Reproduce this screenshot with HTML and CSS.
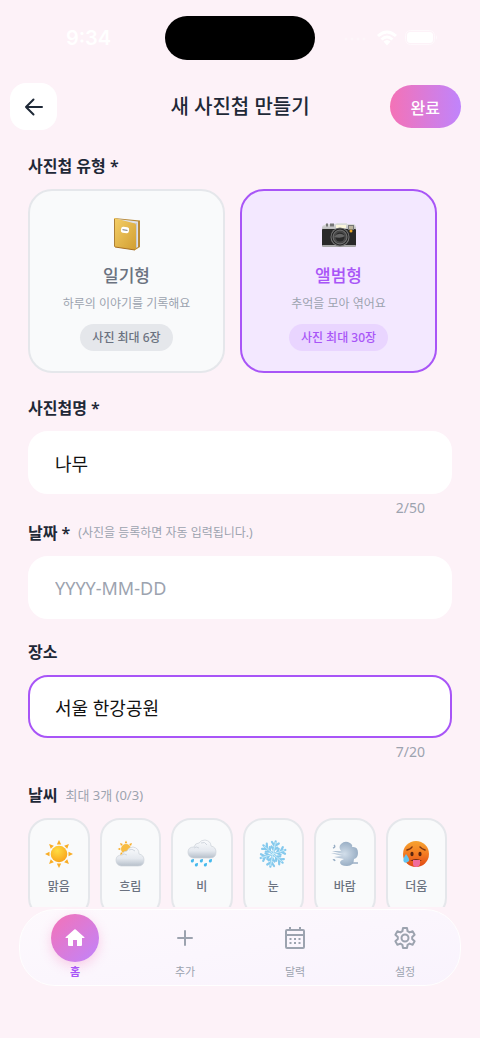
FILE: index.html
```html
<!DOCTYPE html>
<html lang="ko">

<head>
    <meta charset="UTF-8">
    <meta name="viewport" content="width=device-width, initial-scale=1.0">
    <title>새 사진첩 만들기</title>
    <link rel="stylesheet" href="styles.css">
</head>

<body>
    <div class="status-bar">
        <span class="time">9:34</span>
        <div class="island"></div>
        <div class="status-icons">
            <svg width="26" height="6" viewBox="0 0 26 6" fill="#fff" opacity="0.35">
                <circle cx="3" cy="4" r="1.500"/><circle cx="9" cy="4" r="1.500"/><circle cx="15" cy="4" r="1.500"/><circle cx="21" cy="4" r="1.500"/>
            </svg>
            <svg width="20" height="16" viewBox="0 0 20 16" fill="none" stroke="#fff" stroke-width="3">
                <path d="M1 6 Q10 -2 19 6"/>
                <path d="M4.500 9.500 Q10 4.500 15.500 9.500"/>
                <path d="M6.500 11.500 Q10 8.500 13.500 11.500 L10 15.500 Z" fill="#fff" stroke="none"/>
            </svg>
            <svg width="33" height="16" viewBox="0 0 33 16">
                <rect x="0.500" y="0.500" width="29" height="14" rx="5" fill="none" stroke="#fff" opacity="0.5"/>
                <rect x="2" y="2" width="26" height="11" rx="3.500" fill="#fff"/>
                <path d="M31 5 Q33 7.500 31 10 Z" fill="#fff" opacity="0.6"/>
            </svg>
        </div>
    </div>

    <header class="header">
        <button class="back-btn" type="button" aria-label="뒤로">
            <svg width="24" height="24" viewBox="0 0 24 24" fill="none" stroke="#1f2937" stroke-width="2" stroke-linecap="round" stroke-linejoin="round">
                <path d="M20 12H4M11.500 4.500L4 12l7.500 7.500"/>
            </svg>
        </button>
        <h1>새 사진첩 만들기</h1>
        <button class="done-btn" type="button">완료</button>
    </header>

    <main class="content">
        <h2 class="label">사진첩 유형 *</h2>
        <div class="types">
            <button class="type-card" type="button">
                <svg class="type-icon" viewBox="0 0 36 36">
                    <defs>
                        <linearGradient id="cover" x1="0" y1="0" x2="1" y2="1">
                            <stop offset="0" stop-color="#f5cf68"/><stop offset="1" stop-color="#d19e32"/>
                        </linearGradient>
                    </defs>
                    <path d="M5 2L31 4.500V31L26 34Z" fill="#b88937"/>
                    <path d="M8 3L29 5.500V31L25 33Z" fill="#dfe1e6"/>
                    <path d="M27 7V32M25 7V33" stroke="#9da1aa" stroke-width="0.700"/>
                    <path d="M5 2L26 7.500Q27 8 27 9V33Q27 34 26 34L6 31Q5 31 5 30Z" fill="url(#cover)"/>
                    <path d="M5 3V30L6 31V3Z" fill="#ad8037"/>
                    <path d="M6 31L26 34" stroke="#a76e21"/>
                    <rect x="12" y="11" width="8" height="6" rx="2" fill="#fff" transform="rotate(8 16 14)"/>
                    <path d="M13.500 13.700l5 .7" stroke="#777" stroke-width="1"/>
                </svg>
                <strong>일기형</strong>
                <span class="type-desc">하루의 이야기를 기록해요</span>
                <span class="type-limit">사진 최대 6장</span>
            </button>
            <button class="type-card selected" type="button">
                <svg class="type-icon" viewBox="0 0 36 36">
                    <defs>
                        <linearGradient id="metal" x1="0" y1="0" x2="0" y2="1">
                            <stop offset="0" stop-color="#e4e4e5"/><stop offset="1" stop-color="#b5b5b6"/>
                        </linearGradient>
                    </defs>
                    <path d="M1 12Q1 9 4 9V8H14L16 7H26V8H33Q35 9 35 12V14H1Z" fill="url(#metal)"/>
                    <rect x="1" y="13" width="34" height="17" rx="1" fill="#292929"/>
                    <rect x="1" y="29" width="34" height="2" rx="1" fill="#a7a7a7"/>
                    <path d="M5 9h2M9 9h4" stroke="#777" stroke-width="3"/>
                    <rect x="15" y="9" width="10" height="3" fill="#fbf6dc"/>
                    <rect x="27" y="9" width="6" height="5" fill="#777"/>
                    <rect x="28" y="10" width="4" height="3" fill="#bbb49e"/>
                    <circle cx="19" cy="21" r="9.500" fill="#777"/>
                    <circle cx="19" cy="21" r="8.500" fill="#242424"/>
                    <circle cx="19" cy="21" r="7" fill="#484848" stroke="#888" stroke-width="0.800"/>
                    <circle cx="19" cy="21" r="4.500" fill="#292929"/>
                    <path d="M13 21Q18 15 24 20Q20 23 13 21Z" fill="#666"/>
                    <circle cx="30" cy="15" r="1.500" fill="#eba827"/>
                </svg>
                <strong>앨범형</strong>
                <span class="type-desc">추억을 모아 엮어요</span>
                <span class="type-limit">사진 최대 30장</span>
            </button>
        </div>

        <div class="field">
            <label class="label" for="albumName">사진첩명 *</label>
            <input type="text" id="albumName" maxlength="50" value="나무">
            <span class="count">2/50</span>
        </div>

        <div class="field field-date">
            <div class="label-row">
                <label class="label" for="albumDate">날짜 *</label>
                <span class="hint">(사진을 등록하면 자동 입력됩니다.)</span>
            </div>
            <input type="text" id="albumDate" placeholder="YYYY-MM-DD">
        </div>

        <div class="field field-place">
            <label class="label" for="place">장소</label>
            <input class="active" type="text" id="place" maxlength="20" value="서울 한강공원">
            <span class="count">7/20</span>
        </div>

        <div class="label-row weather-title">
            <h2 class="label">날씨</h2>
            <span class="weather-hint">최대 3개 (0/3)</span>
        </div>
        <div class="weather">
            <button type="button">
                <svg viewBox="0 0 30 30">
                    <defs>
                        <radialGradient id="sun" cx="0.4" cy="0.3" r="0.7">
                            <stop offset="0" stop-color="#ffdc42"/><stop offset="1" stop-color="#f9a51c"/>
                        </radialGradient>
                    </defs>
                    <g id="rays" fill="#f9ad26">
                        <path id="ray" d="M15 1L17.200 5.500H12.800Z"/>
                        <use href="#ray" transform="rotate(45 15 15)"/>
                        <use href="#ray" transform="rotate(90 15 15)"/>
                        <use href="#ray" transform="rotate(135 15 15)"/>
                        <use href="#ray" transform="rotate(180 15 15)"/>
                        <use href="#ray" transform="rotate(225 15 15)"/>
                        <use href="#ray" transform="rotate(270 15 15)"/>
                        <use href="#ray" transform="rotate(315 15 15)"/>
                    </g>
                    <circle cx="15" cy="15" r="8.300" fill="url(#sun)"/>
                </svg>
                <span>맑음</span>
            </button>
            <button type="button">
                <svg viewBox="0 0 30 30">
                    <defs>
                        <linearGradient id="cloud" x1="0" y1="0" x2="0" y2="1">
                            <stop offset="0" stop-color="#fafbfd"/><stop offset="0.6" stop-color="#e5e9ef"/><stop offset="1" stop-color="#b6bfca"/>
                        </linearGradient>
                    </defs>
                    <g transform="translate(2 1) scale(0.6)">
                        <use href="#rays"/>
                        <circle cx="15" cy="15" r="8.300" fill="#f7bc43"/>
                    </g>
                    <path d="M6 27Q1 26 1 21Q1 16 7 16Q8 12 12 12Q14 8 18 8Q24 9 24 15Q29 16 29 21Q29 27 23 27Z" fill="url(#cloud)" stroke="#cbd1d9" stroke-width="0.700"/>
                    <path d="M7 16Q9 14 12 16M14 11Q17 9 20 12" fill="none" stroke="#d1d7df"/>
                </svg>
                <span>흐림</span>
            </button>
            <button type="button">
                <svg viewBox="0 0 30 30">
                    <path d="M6 19Q1 18 1 13Q1 8 7 8Q8 4 12 4Q14 1 18 1Q24 2 24 7Q29 8 29 13Q29 19 23 19Z" fill="url(#cloud)" stroke="#cbd1d9" stroke-width="0.700"/>
                    <path d="M7 9Q9 7 12 9M14 4Q18 2 20 6" fill="none" stroke="#d1d7df"/>
                    <g fill="#45b9ed">
                        <path id="drop" d="M7 20Q3 20 4 23Q7 25 7 20Z"/>
                        <use href="#drop" x="9"/><use href="#drop" x="18"/>
                        <use href="#drop" x="4" y="4"/><use href="#drop" x="13" y="4"/>
                    </g>
                </svg>
                <span>비</span>
            </button>
            <button type="button">
                <svg viewBox="0 0 30 30">
                    <g transform="rotate(12 15 15)">
                        <g fill="none" stroke="#85c9ed" stroke-width="2.200" stroke-linecap="round" stroke-linejoin="round">
                            <path id="arm" d="M15 15V2M11.500 3.500L15 7L18.500 3.500M12 8L15 11L18 8"/>
                            <use href="#arm" transform="rotate(60 15 15)"/>
                            <use href="#arm" transform="rotate(120 15 15)"/>
                            <use href="#arm" transform="rotate(180 15 15)"/>
                            <use href="#arm" transform="rotate(240 15 15)"/>
                            <use href="#arm" transform="rotate(300 15 15)"/>
                        </g>
                        <path d="M15 3V27M4.600 9L25.400 21M4.600 21L25.400 9" stroke="#cceefa" stroke-width="0.900"/>
                    </g>
                </svg>
                <span>눈</span>
            </button>
            <button type="button">
                <svg viewBox="0 0 30 30">
                    <defs>
                        <radialGradient id="wind">
                            <stop offset="0" stop-color="#d2deea"/><stop offset="1" stop-color="#9aafc5"/>
                        </radialGradient>
                    </defs>
                    <path d="M2 12L11 12Q8 8 11 5Q15 1 20 4Q23 6 22 8Q28 7 28 14Q28 19 24 20Q24 27 17 27Q10 27 10 23Q11 21 14 20L4 18L12 17L1 14L13 15Z" fill="url(#wind)"/>
                    <path d="M4 6Q6 8 3 9M3 21Q4 20 5 22M22 24H28" fill="none" stroke="#9aafc5" stroke-width="1.500"/>
                </svg>
                <span>바람</span>
            </button>
            <button type="button">
                <svg viewBox="0 0 30 30">
                    <defs>
                        <linearGradient id="hot" x1="0" y1="0" x2="0" y2="1">
                            <stop offset="0" stop-color="#f6a331"/><stop offset="0.5" stop-color="#f47b22"/><stop offset="1" stop-color="#df4714"/>
                        </linearGradient>
                    </defs>
                    <circle cx="15" cy="15" r="13" fill="url(#hot)"/>
                    <path d="M6 11Q10 10 11 8M19 8Q21 10 24 11" fill="none" stroke="#7c3513" stroke-width="1.500" stroke-linecap="round"/>
                    <ellipse cx="11" cy="15" rx="1.600" ry="2.200" fill="#592611"/>
                    <ellipse cx="19" cy="15" rx="1.600" ry="2.200" fill="#592611"/>
                    <path d="M9 22Q15 18 21 22Z" fill="#702b17"/>
                    <path d="M12 21H19V25Q18 28 15.500 28Q12 28 12 25Z" fill="#f06b9c"/>
                    <path d="M5 15Q1 21 3 23Q5 25 8 22Q9 20 5 15Z" fill="#63c4f0"/>
                </svg>
                <span>더움</span>
            </button>
        </div>
    </main>

    <nav class="tab-bar">
        <a class="tab current" href="#">
            <span class="tab-icon">
                <svg width="24" height="24" viewBox="0 0 24 24" fill="#fff">
                    <path d="M10 20v-6h4v6h4q1 0 1-1v-7h2q1 0 .4-.8L12.700 3.600q-.7-.6-1.400 0L2.600 11.200q-.6.8.4.8h2v7q0 1 1 1z"/>
                </svg>
            </span>
            홈
        </a>
        <a class="tab" href="#">
            <span class="tab-icon">
                <svg width="24" height="24" viewBox="0 0 24 24" fill="none" stroke="#9ca3af" stroke-width="2" stroke-linecap="round">
                    <path d="M12 5v14M5 12h14"/>
                </svg>
            </span>
            추가
        </a>
        <a class="tab" href="#">
            <span class="tab-icon">
                <svg width="24" height="24" viewBox="0 0 24 24" fill="none" stroke="#9ca3af" stroke-width="2" stroke-linejoin="round">
                    <rect x="3" y="4" width="18" height="18" rx="1"/>
                    <path d="M3 9h18M7 1v3M17 1v3"/>
                    <path d="M6.500 13h2M11 13h2M15.500 13h2M6.500 17h2M11 17h2M15.500 17h2"/>
                </svg>
            </span>
            달력
        </a>
        <a class="tab" href="#">
            <span class="tab-icon">
                <svg width="24" height="24" viewBox="0 0 24 24" fill="none" stroke="#9ca3af" stroke-width="2" stroke-linejoin="round">
                    <path d="M10 2h4l.6 3.200 2 1.200 3-1.100 2 3.400L19.200 11v2l2.400 2.300-2 3.400-3-1.100-2 1.200L14 22h-4l-.6-3.200-2-1.200-3 1.100-2-3.400L4.800 13v-2L2.400 8.700l2-3.400 3 1.100 2-1.200z"/>
                    <circle cx="12" cy="12" r="3.500"/>
                </svg>
            </span>
            설정
        </a>
    </nav>
</body>

</html>
```
FILE: styles.css
```css
* {
    margin: 0;
    padding: 0;
    box-sizing: border-box;
}

body {
    display: flex;
    flex-direction: column;
    height: 100vh;
    overflow: hidden;
    background: #fdf2f8;
    color: #1f2937;
    font-family: "Noto Sans", "Noto Sans CJK KR", sans-serif;
}

button,
input {
    font-family: inherit;
    border: none;
}

button {
    cursor: pointer;
}

/* status bar */
.status-bar {
    display: grid;
    grid-template-columns: 1fr 150px 1fr;
    align-items: center;
    flex: none;
    height: 76px;
}

.time {
    padding-left: 12px;
    text-align: center;
    font-family: Inter, sans-serif;
    font-size: 20px;
    font-weight: 600;
    line-height: 24px;
    color: #fff;
}

.island {
    height: 44px;
    border-radius: 22px;
    background: #000;
}

.status-icons {
    display: flex;
    align-items: center;
    justify-content: flex-end;
    gap: 8px;
    padding-right: 42px;
}

/* header */
.header {
    display: grid;
    grid-template-columns: 1fr auto 1fr;
    align-items: center;
    flex: none;
    height: 61px;
    padding: 0 19px 0 10px;
}

.header h1 {
    padding-left: 9px;
    font-size: 20px;
    font-weight: 500;
    line-height: 30px;
}

.back-btn {
    display: flex;
    align-items: center;
    justify-content: center;
    width: 47px;
    height: 47px;
    border-radius: 16px;
    background: #fff;
}

.done-btn {
    justify-self: end;
    height: 43px;
    padding: 0 21px;
    border-radius: 22px;
    background: linear-gradient(90deg, #f472b6, #c084fc);
    color: #fff;
    font-size: 16px;
    font-weight: 500;
}

/* form */
.content {
    flex: 1;
    min-height: 0;
    overflow: hidden;
    padding: 17px 28px 0;
}

.label {
    display: block;
    font-size: 16px;
    font-weight: 600;
    line-height: 24px;
}

.label-row {
    display: flex;
    align-items: center;
    gap: 8px;
}

.types {
    display: grid;
    grid-template-columns: 1fr 1fr;
    gap: 15px;
    margin: 11px 15px 23px 0;
}

.type-card {
    display: flex;
    flex-direction: column;
    align-items: center;
    padding: 25px 0 20px;
    border: 2px solid #e5e7eb;
    border-radius: 24px;
    background: #f9fafb;
    color: #6b7280;
}

.type-icon {
    width: 36px;
    height: 36px;
}

.type-card strong {
    margin-top: 10px;
    font-size: 17px;
    font-weight: 500;
    line-height: 28px;
}

.type-desc {
    margin-top: 4px;
    color: #9ca3af;
    font-size: 12px;
    line-height: 20px;
}

.type-limit {
    margin-top: 10px;
    padding: 0 12px;
    border-radius: 14px;
    background: #e5e7eb;
    font-size: 12px;
    font-weight: 500;
    line-height: 27px;
}

.type-card.selected {
    border-color: #a855f7;
    background: #f3e8ff;
    color: #a855f7;
}

.selected .type-limit {
    background: #e9d5ff;
}

.field {
    display: flex;
    flex-direction: column;
}

.field input {
    width: 100%;
    height: 63px;
    margin-top: 11px;
    padding: 0 25px;
    border: 2px solid #fff;
    border-radius: 20px;
    background: #fff;
    color: #111;
    font-size: 18px;
    outline: none;
}

.field input::placeholder {
    color: #9ca3af;
}

.field input.active {
    border-color: #a855f7;
}

.count {
    margin-top: 4px;
    padding-right: 27px;
    text-align: right;
    color: #9ca3af;
    font-size: 14px;
    line-height: 20px;
}

.field-date {
    margin-top: 3px;
}

.field-place {
    margin-top: 21px;
}

.hint {
    color: #9ca3af;
    font-size: 12px;
    line-height: 24px;
}

/* weather */
.weather-title {
    margin-top: 21px;
}

.weather-hint {
    color: #9ca3af;
    font-size: 13px;
    line-height: 24px;
}

.weather {
    display: grid;
    grid-template-columns: repeat(6, 1fr);
    gap: 10px;
    margin: 11px 5px 0 0;
}

.weather button {
    display: flex;
    flex-direction: column;
    align-items: center;
    padding: 19px 0;
    border: 2px solid #e5e7eb;
    border-radius: 20px;
    background: #f9fafb;
    color: #6b7280;
    font-size: 12px;
    font-weight: 500;
    line-height: 20px;
}

.weather svg {
    width: 30px;
    height: 30px;
    margin-bottom: 8px;
}

/* bottom tabs */
.tab-bar {
    display: flex;
    flex: none;
    height: 77px;
    margin: 2px 19px 52px;
    border: 1px solid #fff;
    border-radius: 36px;
    background: linear-gradient(170deg, #fdf9fd, #f9f3fd);
}

.tab {
    display: flex;
    flex: 1;
    flex-direction: column;
    align-items: center;
    padding-top: 4px;
    color: #9ca3af;
    font-size: 11px;
    line-height: 20px;
    text-decoration: none;
}

.tab-icon {
    display: flex;
    align-items: center;
    justify-content: center;
    width: 48px;
    height: 48px;
    border-radius: 50%;
}

.tab.current {
    color: #a855f7;
    font-weight: 600;
}

.current .tab-icon {
    background: linear-gradient(135deg, #f472b6, #c084fc);
    box-shadow: 0 4px 12px rgba(244, 114, 182, 0.3);
}
```
